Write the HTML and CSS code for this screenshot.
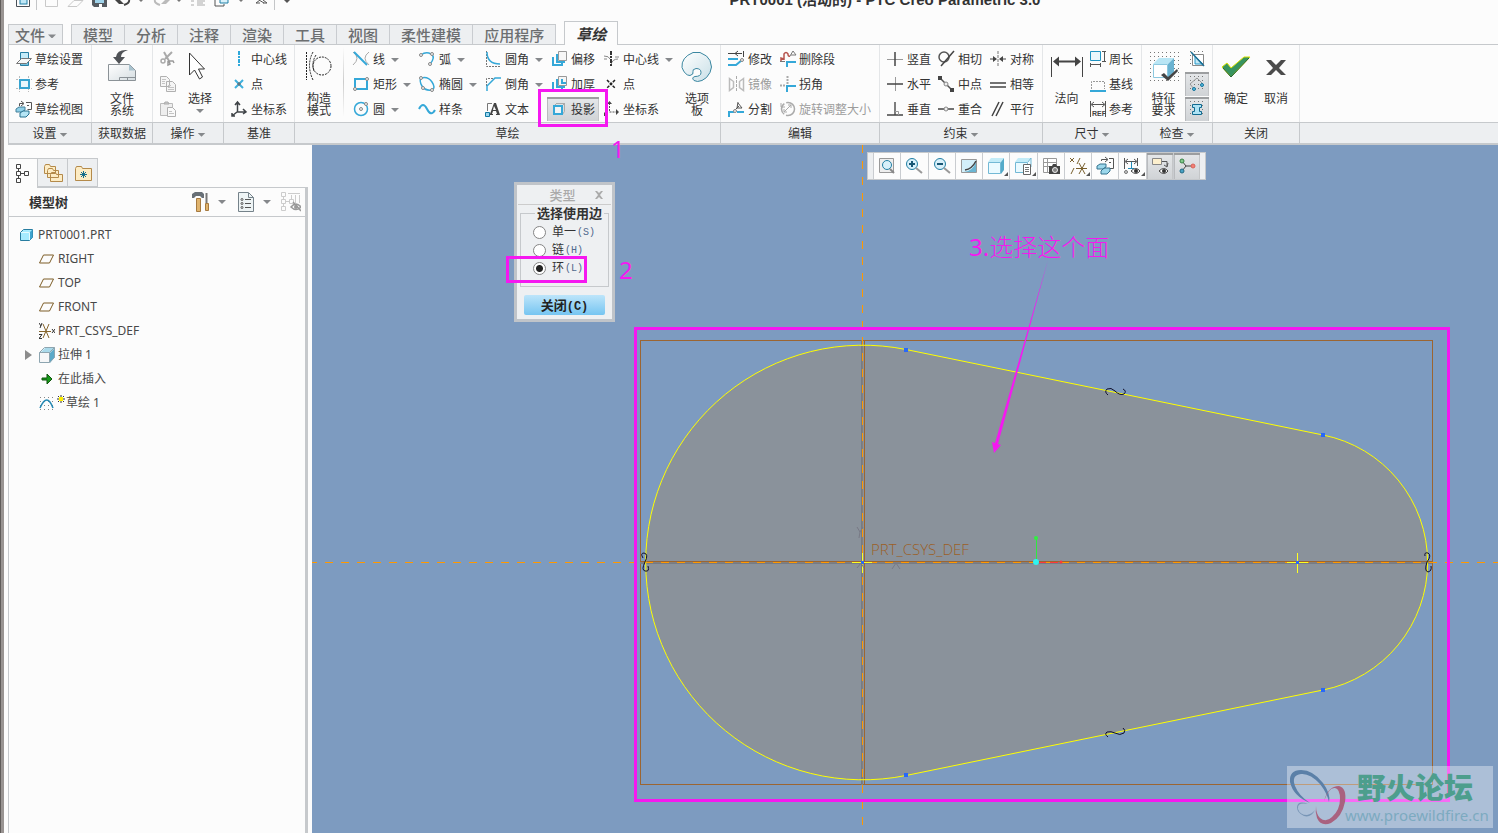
FILE: index.html
```html
<!DOCTYPE html>
<html lang="zh-CN">
<head>
<meta charset="utf-8">
<title>PRT0001 (活动的) - PTC Creo Parametric 3.0</title>
<link rel="stylesheet" href="styles.css">
</head>
<body>
<div class="app">
  <header class="titlebar">
    <svg class="quick" viewBox="0 0 290 12">
      <g fill="none" stroke="#555">
        <path d="M8.500 0v6.500h13V0" stroke="#4a5058"/><rect x="12" y="-3" width="7" height="7" fill="#bfe6f5" stroke="#1f7fa5"/>
        <path d="M28.500 0v10M266.500 0v10" stroke="#c4c6c8"/>
        <path d="M37.500 0v6.500h12V0M60 6.500l6-6h9l-6 6z" stroke="#c9c9c9"/>
      </g>
      <path d="M84 0h15v7H86l-2-2z" fill="#555b61"/><path d="M87 0h9v3h-9z" fill="#9fd3ea"/><path d="M91 4h3v3h-3z" fill="#fff"/>
      <path d="M107 0l4 4h5L112 0z" fill="#444"/><path d="M121 0q1 3-5 5" fill="none" stroke="#444" stroke-width="2"/>
      <path d="M162 0l-4 4h-5l4-4z" fill="#bbb"/><path d="M147 0q-1 3 5 5" fill="none" stroke="#bbb" stroke-width="2"/>
      <path d="M131 0h4l-2 2zM169 0h4l-2 2zM231 0h4l-2 2z" fill="#777"/>
      <path d="M183 1h3M183 5h3M189 1h8M189 5h8M189 3h6" stroke="#aaa" fill="none"/>
      <path d="M207 0v6h9V4" fill="none" stroke="#555"/><path d="M212-4h8v7h-8z" fill="#d9f1fa" stroke="#1f7fa5"/>
      <path d="M248 3l4-3M248 3h4M259 3l-4-3M259 3h-4M251 0l5 3" fill="none" stroke="#555"/>
      <path d="M276 0h6l-3 3z" fill="#555"/>
    </svg>
    <div class="title">PRT0001 (活动的) - PTC Creo Parametric 3.0</div>
  </header>

  <nav class="tabs">
    <button class="tab file">文件<i class="caret"></i></button>
    <div class="tabset">
      <button class="tab">模型</button><button class="tab">分析</button><button class="tab">注释</button><button class="tab">渲染</button><button class="tab">工具</button><button class="tab">视图</button><button class="tab">柔性建模</button><button class="tab">应用程序</button>
    </div>
    <button class="tab active">草绘</button>
  </nav>

  <div class="ribbon">
    <section class="group">
      <div class="body lead7">
        <div class="col w75">
          <button class="cmd tight"><svg viewBox="0 0 16 16"><path d="M4.500 1.500h8v13h-8z" fill="#74bfdd" stroke="#277fa4"/><path d="M5 2h7v5H5z" fill="#c5ecfa"/><path d="M0.500 12.500l5-5h10l-5 5z" fill="#f5f7f8" stroke="#777"/></svg>草绘设置</button>
          <button class="cmd tight"><svg viewBox="0 0 16 16"><path d="M0 3.500h16M0 12.500h16M3.500 0v16M12.500 0v16" stroke="#bbb" stroke-dasharray="2 1"/><rect x="4" y="4" width="9" height="8" fill="#eaf7fc" stroke="#38a4d0" stroke-width="2"/></svg>参考</button>
          <button class="cmd tight"><svg viewBox="0 0 16 16"><path d="M3.500 5V2.500h4M5 0l3 2.500L5 5M10 1.500h5.500v7h-4M11 4.500h2" fill="none" stroke="#555"/><path d="M0 8l3-2h6v3l-3 2H0z" fill="#8fd0e8" stroke="#44809a"/><path d="M4 12l3-2h6v3l-3 3H4z" fill="#b5e5f5" stroke="#26708e"/></svg>草绘视图</button>
        </div>
      </div>
      <footer>设置<i class="caret"></i></footer>
    </section>

    <section class="group">
      <div class="body"><button class="big w60"><svg viewBox="0 0 32 34"><defs><linearGradient id="sheet" x2="1" y2="1"><stop offset="0" stop-color="#fff"/><stop offset="1" stop-color="#d5dde1"/></linearGradient></defs><path d="M2.500 15.500h21l6 6v10h-27z" fill="url(#sheet)" stroke="#8b9297"/><path d="M23 15v6.500h6z" fill="#a9c3cf"/><path d="M13.500 32v-3.500h16M21.500 28v4" fill="none" stroke="#8b9297"/><path d="M22 1q-11-1-12 7H7l6 7 6-7h-4q0-5 7-7z" fill="#505357"/></svg><span>文件<br>系统</span></button></div>
      <footer>获取数据</footer>
    </section>

    <section class="group">
      <div class="body lead7">
        <div class="col w20">
          <button class="cmd" aria-label="剪切"><svg viewBox="0 0 16 16"><path d="M4 1l5 9M12 1L5 8" fill="none" stroke="#aaa" stroke-width="2"/><circle cx="3" cy="10" r="2" fill="none" stroke="#aaa" stroke-width="1.500"/><path d="M8 10v4l2-1-1-3h4l1 2" fill="none" stroke="#999" stroke-width="1.500"/></svg></button>
          <button class="cmd" aria-label="复制"><svg viewBox="0 0 16 16"><path d="M.500.500h6l3 3v7h-9zM6.500 5.500h6l3 3v7h-9z" fill="#f5f5f5" stroke="#b0b0b0"/><path d="M2 3.500h4M2 5.500h3M2 7.500h3M8 9.500h3M8 11.500h6M8 13.500h6" stroke="#c4c4c4"/></svg></button>
          <button class="cmd" aria-label="粘贴"><svg viewBox="0 0 16 16"><path d="M.500 2.500h12v12H.500z" fill="#eee" stroke="#bbb"/><path d="M4 3l1-2h3l1 2z" fill="#ccc" stroke="#aaa"/><path d="M7.500 6.500h5l3 3v6h-8z" fill="#fafafa" stroke="#b0b0b0"/><path d="M9 10.500h3M9 12.500h5" stroke="#c4c4c4"/></svg></button>
        </div>
        <button class="big w43"><svg viewBox="0 0 32 34"><path d="M5.500 4v22l5-5 5 9 3-2-4-8h6z" fill="#fff" stroke="#333"/></svg><span>选择</span><i class="caret"></i></button>
      </div>
      <footer>操作<i class="caret"></i></footer>
    </section>

    <section class="group">
      <div class="body lead7">
        <div class="col w63">
          <button class="cmd"><svg viewBox="0 0 16 16"><path d="M8 0v16" stroke="#2fa8da" stroke-width="2" stroke-dasharray="4 1 2 1"/></svg>中心线</button>
          <button class="cmd"><svg viewBox="0 0 16 16"><path d="M4 4l8 8M12 4l-8 8" stroke="#3eb0de" stroke-width="2"/><path d="M8 6v4M6 8h4" stroke="#666"/></svg>点</button>
          <button class="cmd"><svg viewBox="0 0 16 16"><path d="M6.500 2v9h8M6 11l-5 4M4 4l2.500-3L9 4M12 8l3 3-3 2M1 12v3h3" fill="none" stroke="#3f4347" stroke-width="1.500"/></svg>坐标系</button>
        </div>
      </div>
      <footer>基准</footer>
    </section>

    <section class="group">
      <div class="body">
        <button class="big w48"><svg viewBox="0 0 32 34"><g fill="none" stroke="#222" stroke-dasharray="2 1"><path d="M3.500 3v28M10 3q-7 13 0 28M13 6q-5 8-2 16"/><circle cx="19" cy="17" r="9"/></g></svg><span>构造<br>模式</span></button>
        <hr>
        <div class="col w66">
          <button class="cmd"><svg viewBox="0 0 16 16"><path d="M0 1q8 6 0 13M16 1q-8 6 0 13" fill="none" stroke="#aaa"/><path d="M1 1l13 13" stroke="#35a8d8" stroke-width="2"/></svg>线<i class="caret"></i></button>
          <button class="cmd"><svg viewBox="0 0 16 16"><path d="M2 3h12v10H2z" fill="none" stroke="#35a8d8" stroke-width="2"/><g class="node"><circle cx="14" cy="3" r="1.500"/><circle cx="2" cy="13" r="1.500"/></g></svg>矩形<i class="caret"></i></button>
          <button class="cmd"><svg viewBox="0 0 16 16"><circle cx="8" cy="8" r="6.500" fill="none" stroke="#35a8d8" stroke-width="1.500"/><g class="node"><circle cx="8" cy="8" r="1.500"/><circle cx="13" cy="3" r="1.500"/></g></svg>圆<i class="caret"></i></button>
        </div>
        <div class="col w66">
          <button class="cmd"><svg viewBox="0 0 16 16"><path d="M2 4q5-4 10-1t-1 10" fill="none" stroke="#35a8d8" stroke-width="1.500"/><g class="node"><circle cx="2" cy="4" r="1.500"/><circle cx="13" cy="3" r="1.500"/><circle cx="11" cy="13" r="1.500"/></g></svg>弧<i class="caret"></i></button>
          <button class="cmd"><svg viewBox="0 0 16 16"><path d="M2 2q7-2 11 4t0 8q-7 1-10-4T2 2z" fill="none" stroke="#35a8d8" stroke-width="1.500"/><g class="node"><circle cx="2" cy="2" r="1.500"/><circle cx="4" cy="12" r="1.500"/><circle cx="13" cy="14" r="1.500"/></g></svg>椭圆<i class="caret"></i></button>
          <button class="cmd"><svg viewBox="0 0 16 16"><path d="M0 8q4-8 8 0t8 1" fill="none" stroke="#35a8d8" stroke-width="2"/></svg>样条</button>
        </div>
        <div class="col w62">
          <button class="cmd"><svg viewBox="0 0 16 16"><path d="M1.500 0v15.500H15" fill="none" stroke="#777" stroke-dasharray="2 1"/><path d="M2 1q0 12 13 12" fill="none" stroke="#35a8d8" stroke-width="1.500"/></svg>圆角<i class="caret"></i></button>
          <button class="cmd"><svg viewBox="0 0 16 16"><path d="M1.500 10V2.500H10" fill="none" stroke="#777" stroke-dasharray="2 1"/><path d="M2 15v-5l8-8h6" fill="none" stroke="#35a8d8" stroke-width="1.500"/></svg>倒角<i class="caret"></i></button>
          <button class="cmd"><svg viewBox="0 0 16 16"><path d="M2.500 10V2.500H7" fill="none" stroke="#777"/><path d="M9 2h2l4 12h-4v-1h1l-1-3H8l-1 3h1v1H4v-1h1zM8 9h3L9 5z" fill="#444"/><path d="M.500 11.500h4v4h-4z" fill="#9bd6ef" stroke="#1178a2"/></svg>文本</button>
        </div>
        <div class="col w56 inset">
          <button class="cmd"><svg viewBox="0 0 16 16"><path d="M7.500.500h8v9h-8z" fill="#f6f6f6" stroke="#999"/><path d="M2 6v8h9v-3M6 3v8h8" fill="none" stroke="#35a8d8" stroke-width="2"/></svg>偏移</button>
          <button class="cmd"><svg viewBox="0 0 16 16"><path d="M7.500.500h8v9h-8z" fill="#f6f6f6" stroke="#999"/><path d="M2 6v8h9v-3M6 3v8h8M11 3v4h4" fill="none" stroke="#35a8d8" stroke-width="2"/></svg>加厚</button>
          <button class="cmd pressed"><svg viewBox="0 0 16 16"><path d="M5.500 2.500h8v8L11 14M3 5l3-3M11 5l3-3" fill="none" stroke="#aaa"/><path d="M3 5v8h8V5z" fill="#f2f5f7" stroke="#35a8d8" stroke-width="2"/></svg>投影<span class="mark"></span></button>
        </div>
        <div class="col w75">
          <button class="cmd"><svg viewBox="0 0 16 16"><path d="M1 5q5 0 6 3M15 8q-6 0-7 6M1 8h3M12 6h4" fill="none" stroke="#888"/><path d="M8 0v16" stroke="#333" stroke-width="2" stroke-dasharray="4 1 2 1"/></svg>中心线<i class="caret"></i></button>
          <button class="cmd"><svg viewBox="0 0 16 16"><path d="M4 4l8 8M12 4l-8 8" stroke="#222" stroke-width="1.500" stroke-dasharray="3 1"/></svg>点</button>
          <button class="cmd"><svg viewBox="0 0 16 16"><path d="M6.500 2v9h8" fill="none" stroke="#555" stroke-dasharray="2 1"/><path d="M4 3l2.500-3L9 3zM13 8l3 3-3 3zM1 11v4h4z" fill="#444"/></svg>坐标系</button>
        </div>
        <button class="big w42"><svg viewBox="0 0 32 34"><defs><linearGradient id="palette" x2="1" y2="1"><stop offset="0" stop-color="#fff"/><stop offset="1" stop-color="#c8dfe7"/></linearGradient></defs><path d="M12 3.500h7q8 3 10 8 3 7 0 12-3 6-8 8-5 2-8 0-3-3 1-4 6 0 6-4 0-4-5-4-4 1-3 3 1 3-3 4-5 0-8-8-1-10 11-15z" fill="url(#palette)" stroke="#3b87a1"/></svg><span>选项<br>板</span></button>
      </div>
      <footer>草绘</footer>
    </section>

    <section class="group">
      <div class="body lead7">
        <div class="col w52">
          <button class="cmd"><svg viewBox="0 0 16 16"><path d="M0 2.500h14M10 0l-3 2.500L10 5M15.500 0v6" fill="none" stroke="#444"/><path d="M0 8h10M0 14h8l6-5" fill="none" stroke="#35a8d8" stroke-width="2"/><g class="node"><circle cx="14" cy="9" r="1.500"/></g></svg>修改</button>
          <button class="cmd" disabled><svg viewBox="0 0 16 16"><path d="M1.500 2.500l4 3v6l-4 3zM15.500 2.500l-4 3v6l4 3z" fill="none" stroke="#bbb" stroke-width="1.500"/><path d="M8.500 0v16" stroke="#aaa" stroke-dasharray="3 1"/></svg>镜像</button>
          <button class="cmd"><svg viewBox="0 0 16 16"><path d="M1 16v-5h5M9 11h7" fill="none" stroke="#35a8d8" stroke-width="2"/><path d="M7 9l4-4M10 2l4 5H9l1-6" fill="none" stroke="#555"/><g class="node"><circle cx="7" cy="10" r="1.500"/></g></svg>分割</button>
        </div>
        <div class="col w99">
          <button class="cmd tight"><svg viewBox="0 0 16 16"><path d="M1 11V7l3 1V3q2-3 4 0 0 3 2 2" fill="none" stroke="#b6544e" stroke-width="1.500"/><path d="M7 16v-5h9" fill="none" stroke="#35a8d8" stroke-width="2"/><path d="M10 5l3-5 3 4h-5M0 10.500h5" fill="none" stroke="#777"/></svg>删除段</button>
          <button class="cmd tight"><svg viewBox="0 0 16 16"><path d="M7.500 0v9M0 9.500h6" stroke="#aaa" stroke-width="2" stroke-dasharray="2 1"/><path d="M7 16v-6h9" fill="none" stroke="#35a8d8" stroke-width="2"/></svg>拐角</button>
          <button class="cmd tight" disabled><svg viewBox="0 0 16 16"><circle cx="8" cy="8" r="6.500" fill="none" stroke="#aaa" stroke-width="1.500" stroke-dasharray="12 2"/><path d="M4 11l7-7M8 4h3v3M4 8v3h3M1 2v4h4" fill="none" stroke="#aaa"/></svg>旋转调整大小</button>
        </div>
      </div>
      <footer>编辑</footer>
    </section>

    <section class="group">
      <div class="body lead7">
        <div class="col w51">
          <button class="cmd"><svg viewBox="0 0 16 16"><path d="M0 8.500h16" stroke="#999"/><path d="M8 1v14" stroke="#444" stroke-width="1.500"/></svg>竖直</button>
          <button class="cmd"><svg viewBox="0 0 16 16"><path d="M8.500 1v14" stroke="#999"/><path d="M0 8h16" stroke="#444" stroke-width="1.500"/></svg>水平</button>
          <button class="cmd"><svg viewBox="0 0 16 16"><path d="M8 1v13" stroke="#555" stroke-width="1.500"/><path d="M0 14h16" stroke="#444" stroke-width="1.500"/><path d="M8 10.500h3.500V14" fill="none" stroke="#999"/></svg>垂直</button>
        </div>
        <div class="col w52">
          <button class="cmd"><svg viewBox="0 0 16 16"><circle cx="6" cy="6" r="5" fill="none" stroke="#555" stroke-width="1.500"/><path d="M3 15L16 0" stroke="#444" stroke-width="1.500"/></svg>相切</button>
          <button class="cmd"><svg viewBox="0 0 16 16"><path d="M2 2l12 12" stroke="#555" stroke-width="1.500"/><path d="M0 0h4v4H0zM12 12h4v4h-4z" fill="#444"/><g class="node"><circle cx="8" cy="8" r="2"/></g></svg>中点</button>
          <button class="cmd"><svg viewBox="0 0 16 16"><path d="M0 8h16" stroke="#444" stroke-width="1.500"/><g class="node"><circle cx="8" cy="8" r="2"/></g></svg>重合</button>
        </div>
        <div class="col w52">
          <button class="cmd"><svg viewBox="0 0 16 16"><path d="M8 0v16" stroke="#777" stroke-dasharray="3 1"/><path d="M0 8h5M11 8h5" stroke="#444"/><path d="M3 5l4 3-4 3zM13 5L9 8l4 3z" fill="#444"/></svg>对称</button>
          <button class="cmd"><svg viewBox="0 0 16 16"><path d="M0 7h16M0 11h16" stroke="#444" stroke-width="1.500"/></svg>相等</button>
          <button class="cmd"><svg viewBox="0 0 16 16"><path d="M2 15L9 1M6 15l7-14" stroke="#444" stroke-width="1.500"/></svg>平行</button>
        </div>
      </div>
      <footer>约束<i class="caret"></i></footer>
    </section>

    <section class="group">
      <div class="body">
        <button class="big w47"><svg viewBox="0 0 32 34"><path d="M.500 8v20M31.500 8v20" stroke="#444"/><path d="M5 12.500h22" stroke="#444" stroke-width="2"/><path d="M2 12.500l6-5v10zM30 12.500l-6-5v10z" fill="#444"/></svg><span>法向</span></button>
        <div class="col w51">
          <button class="cmd tight"><svg viewBox="0 0 16 16"><path d="M.500.500h10v9H.500z" fill="#eaf7fc" stroke="#1f93c2"/><path d="M14.500 1v9M12 .500h4M12 10.500h4M1 13.500h9M.500 12v4M10.500 12v4" stroke="#555"/></svg>周长</button>
          <button class="cmd tight"><svg viewBox="0 0 16 16"><path d="M1.500 13V5.500h13V13" fill="none" stroke="#999" stroke-dasharray="2 1"/><path d="M0 15h16" stroke="#35a8d8" stroke-width="2"/></svg>基线</button>
          <button class="cmd tight"><svg viewBox="0 0 16 16"><path d="M.500 0v16M15.500 0v16M2 3.500h12M4 1L1 3.500 4 6M12 1l3 2.500L12 6" fill="none" stroke="#555"/><text x="2" y="15" class="ref">REF</text></svg>参考</button>
        </div>
      </div>
      <footer>尺寸<i class="caret"></i></footer>
    </section>

    <section class="group">
      <div class="body">
        <button class="big w43"><svg viewBox="0 0 32 34"><g stroke="#777" stroke-dasharray="1 3"><path d="M2 3.500h29M2 7.500h29M2 11.500h29M2 15.500h29M2 19.500h29M2 23.500h29M2 27.500h29M2 31.500h29"/></g><path d="M5 15l6-6h15l-6 6z" fill="#b9e6f5"/><path d="M20 15l6-6v14l-6 6z" fill="#6bb3d1"/><path d="M5.500 15.500h14v13h-14z" fill="#fff" stroke="#8cc8df"/><path d="M13 26l3-2 4 4 9-8 1 2-10 10z" fill="#444"/></svg><span>特征<br>要求</span></button>
        <div class="col w27 checks">
          <button class="cmd icon" aria-label="着色封闭环"><svg viewBox="0 0 16 16"><path d="M1 .500h15M1 4.500h15M1 8.500h15M1 12.500h15" stroke="#777" stroke-dasharray="1 3"/><path d="M3.500 3.500h11v11h-11z" fill="#fff" stroke="#888"/><path d="M6 5v8h8z" fill="#c3e8f5" stroke="#2598c8"/><path d="M2 1l13 14" stroke="#1d6f95" stroke-width="1.500"/></svg></button>
          <button class="cmd icon pressed" aria-label="突出显示开放端"><svg viewBox="0 0 16 16"><path d="M1 .500h15M1 4.500h15M1 8.500h15M1 12.500h15" stroke="#777" stroke-dasharray="1 3"/><path d="M5 13L1 8l7-6 6 6" fill="none" stroke="#999"/><circle cx="5" cy="13" r="1.500" fill="#5ac0e6" stroke="#16749b"/><circle cx="13" cy="9" r="1.500" fill="#5ac0e6" stroke="#16749b"/></svg></button>
          <button class="cmd icon pressed" aria-label="重叠几何"><svg viewBox="0 0 16 16"><path d="M1 .500h15M1 4.500h15M1 8.500h15M1 12.500h15" stroke="#777" stroke-dasharray="1 3"/><path d="M3.500 3.500h9v3h-2v4h2v3h-9v-3h2v-4h-2z" fill="#aee3f5" stroke="#126b91"/></svg></button>
        </div>
      </div>
      <footer>检查<i class="caret"></i></footer>
    </section>

    <section class="group">
      <div class="body lead3">
        <button class="big w40"><svg viewBox="0 0 32 34"><path d="M2 18l5-4 4 5L24 8h6L11 28z" fill="#379460" stroke="#d8e000"/><path d="M3 19l8 9L29 9" fill="none" stroke="#246338"/></svg><span>确定</span></button>
        <button class="big w40"><svg viewBox="0 0 32 34"><path d="M6 11h5l5 5 5-5h5l-7 8 7 7h-5l-5-5-5 5H6l7-7z" fill="#4b4b4b"/></svg><span>取消</span></button>
      </div>
      <footer>关闭</footer>
    </section>
    <section class="group rest"><div class="body"></div><footer></footer></section>
  </div>

  <div class="work">
    <aside class="side">
      <div class="sidetabs">
        <button class="on" aria-label="模型树"><svg viewBox="0 0 20 20"><path d="M3.500.500h4v4h-4zM3.500 7.500h4v4h-4zM3.500 14.500h4v4h-4zM11.500 7.500h4v4h-4zM5.500 5v2M5.500 12v2M8 9.500h3" fill="none" stroke="#444"/></svg></button>
        <button aria-label="文件夹浏览器"><svg viewBox="0 0 20 20"><g fill="#fdecc4" stroke="#b48a4a"><path d="M1.500 3.500l1-2h4l1 2h5v7h-11zM4.500 7.500l1-2h4l1 2h5v7h-11zM7.500 11.500l1-2h4l1 2h6v7h-12z"/></g></svg></button>
        <button aria-label="收藏夹"><svg viewBox="0 0 20 20"><path d="M2.500 5.500l1-2h5l1 2h9v12h-16z" fill="#fdecc4" stroke="#b48a4a"/><path d="M10.500 8v7M7 11.500h7M8 9l5 5M13 9l-5 5" stroke="#176e8b"/></svg></button>
      </div>
      <div class="panel">
        <div class="panelhead">
          <h2>模型树</h2>
          <button aria-label="设置"><svg viewBox="0 0 20 20"><path d="M5.500 6.500h4v13h-4z" fill="#e0b46e" stroke="#a67a40"/><path d="M1 2l3-2h7l2 2v4h-2L9 4H5L3 6H1z" fill="#687077"/><path d="M15.500 1v10" stroke="#777" stroke-width="2"/><path d="M14.500 11.500h3v7h-3z" fill="#e0b46e" stroke="#a67a40"/></svg></button><i class="caret"></i>
          <button aria-label="显示"><svg viewBox="0 0 20 20"><path d="M2.500.500h10l5 5v14h-15z" fill="#eef4f5" stroke="#75828a"/><path d="M12.500 1v4.500h5" fill="none" stroke="#75828a"/><g fill="none" stroke="#555"><circle cx="6" cy="7.500" r="1"/><circle cx="6" cy="11.500" r="1"/><circle cx="6" cy="15.500" r="1"/><path d="M9 7.500h6M9 11.500h6M9 15.500h6"/></g></svg></button><i class="caret"></i>
          <button aria-label="隐藏树列"><svg viewBox="0 0 20 20"><path d="M.500.500h4v4h-4zM.500 7.500h4v4h-4zM.500 14.500h4v4h-4zM8.500 7.500h4v4h-4zM2.500 5v2M2.500 12v2M5 9.500h3M7 1.500h12M10.500 3v4M14.500 3v8M18.500 3v8" fill="none" stroke="#ccc"/><path d="M10 15q5-6 10 0-5 5-10 0zM12 10l8 9" fill="none" stroke="#999" stroke-width="1.500"/><circle cx="15" cy="15" r="2" fill="#999"/></svg></button>
        </div>
        <ul class="tree">
          <li class="root"><svg viewBox="0 0 16 16"><path d="M1.500 5.500l3-3h9v8l-3 3h-9z" fill="#a5ebff" stroke="#287da0"/><path d="M10.500 5.500l3-3v8l-3 3z" fill="#3fa4cf"/><path d="M2 5.500h8.500v7.500" fill="none" stroke="#e3fbff"/></svg>PRT0001.PRT</li>
          <li><svg viewBox="0 0 16 16"><path d="M4.500 4h10l-4 8H.500z" fill="none" stroke="#7c5c26"/></svg>RIGHT</li>
          <li><svg viewBox="0 0 16 16"><path d="M4.500 4h10l-4 8H.500z" fill="none" stroke="#7c5c26"/></svg>TOP</li>
          <li><svg viewBox="0 0 16 16"><path d="M4.500 4h10l-4 8H.500z" fill="none" stroke="#7c5c26"/></svg>FRONT</li>
          <li><svg viewBox="0 0 16 16"><path d="M0 8.500h12M4 1l6 14M10 1L4 15" stroke="#86652c"/><path d="M0 0l2 3M3 0L1 5M13 6l3 4M16 6l-3 4M0 11.500h3l-3 4h3" fill="none" stroke="#333"/></svg>PRT_CSYS_DEF</li>
          <li class="parent"><svg viewBox="0 0 16 16"><path d="M1 6l5-5h10l-5 5z" fill="#a9d9ea"/><path d="M11 6l5-5v9l-5 6z" fill="#5ba9c8"/><path d="M.500 5.500h10v10H.500zM.500 5.500l5-5h10v10l-5 5M10.500 5.500l5-5" fill="none" stroke="#8da5b0"/><path d="M1 6h9v9H1z" fill="#f6f7f8"/></svg>拉伸 1</li>
          <li><svg viewBox="0 0 16 16"><path d="M3 7h5V3l5 5-5 5v-4H3z" fill="#159a18" stroke="#11550f"/></svg>在此插入</li>
          <li><svg class="wide" viewBox="0 0 26 16"><path d="M1 2.500h14M1 6.500h14M1 10.500h14M1 14.500h14" stroke="#888" stroke-dasharray="1 3"/><path d="M1 13q7-16 13 0" fill="none" stroke="#2589b4" stroke-width="1.500"/><path d="M22 0v8M18 4h8M19 1l6 6M25 1l-6 6" stroke="#333"/><path d="M20 2h4v4h-4z" fill="#fff000"/></svg>草绘 1</li>
        </ul>
      </div>
    </aside>

    <main class="canvas">
      <svg class="scene">
        <g transform="translate(-312 -145)" fill="none">
          <path d="M906 349.500L1323 435A130 130 0 0 1 1323 690L906 775.500A217.300 217.300 0 1 1 906 349.500z" fill="#8a929b"/>
          <g shape-rendering="crispEdges">
            <path d="M640.500 340.500h792v444h-792z" stroke="#9c6531"/>
            <path d="M861.500 340v445M640 563.500h792" stroke="#767b84"/>
            <path d="M864.500 340v445M640 561.500h792" stroke="#9c6531"/>
            <path d="M862.500 340v445M640 562.500h792" stroke="#84807c"/>
            <path d="M309 562.500h2400M862.500 145v1800" stroke="#ff9900" stroke-dasharray="8 8"/>
          </g>
          <path d="M906 349.500L1323 435A130 130 0 0 1 1323 690L906 775.500A217.300 217.300 0 1 1 906 349.500z" stroke="#ffff00"/>
          <g stroke="#10102c">
            <path d="M1108 395q-4-3-1-6 4-2 8 2 5 5 9 3 3-3-1-5"/>
            <path d="M1108 737q-4-3-1-5 4-1 8 1 5 3 9 0 2-3-1-5"/>
            <path d="M643 558q-3-5 1-5 5 1 1 9-4 8 0 9 5 1 3-5"/>
            <path d="M1425 556q-1-4 3-3 4 2-1 9-3 9 1 10 4-1 3-6"/>
          </g>
          <path d="M904 348h4v4h-4zM1321 433h4v4h-4zM1321 688h4v4h-4zM904 773h4v4h-4z" fill="#2868f8"/>
          <path d="M1297.500 553v20M1287 562.500h21M862.500 553v20M852 562.500h20" stroke="#ffff20" shape-rendering="crispEdges"/>
          <path d="M1296 561h3v3h-3zM861 561h3v3h-3z" fill="#2868f8"/>
          <g stroke="#787985"><path d="M857 527l3 5 3-5M860 532l-1 6M892 569l4-6 4 6M857 568l4-5 3 5"/></g>
          <text x="871" y="555" class="csys">PRT_CSYS_DEF</text>
          <path d="M1036.500 562v-24" stroke="#30e840"/><circle cx="1036" cy="538" r="2" fill="#30f040"/>
          <path d="M1038 562.500h23" stroke="#ff3838" stroke-dasharray="8 4"/><circle cx="1061" cy="562" r="1.500" fill="#ff3838"/><circle cx="1036" cy="562" r="3" fill="#30f4ef"/>
          <path d="M635.500 328.500h813v472h-813z" stroke="#f518f0" stroke-width="3"/>
          <path d="M1048 260L998 444l3 1-7 8-2-11 3 1z" fill="#f518f0"/>
        </g>
      </svg>

      <div class="note one">1</div>
      <div class="note two">2</div>
      <div class="note three"><b>3.</b>选择这个面</div>

      <div class="viewbar">
        <button aria-label="重新调整"><svg viewBox="0 0 20 20"><path d="M2.500 2.500h14v14h-14z" fill="#eee" stroke="#999"/><circle cx="10" cy="9" r="4.500" fill="#d8f0fa" stroke="#217fa4"/><path d="M13 13l4 4" stroke="#888" stroke-width="2"/></svg></button>
        <button aria-label="放大"><svg viewBox="0 0 20 20"><circle cx="8" cy="8" r="5.500" fill="#d8f0fa" stroke="#217fa4"/><path d="M5 8h6M8 5v6" stroke="#195775" stroke-width="2"/><path d="M12 12l6 5" stroke="#999" stroke-width="2"/></svg></button>
        <button aria-label="缩小"><svg viewBox="0 0 20 20"><circle cx="8" cy="8" r="5.500" fill="#d8f0fa" stroke="#217fa4"/><path d="M5 8h6" stroke="#195775" stroke-width="2"/><path d="M12 12l6 5" stroke="#999" stroke-width="2"/></svg></button>
        <button aria-label="重画"><svg viewBox="0 0 20 20"><path d="M2.500 3.500h15v13h-15z" fill="#d3effa" stroke="#999"/><path d="M17 6v10H5q9-1 12-10z" fill="#6bb5d2"/><path d="M6 14q7-1 11-9" fill="none" stroke="#444" stroke-width="1.500"/></svg></button>
        <button class="menu" aria-label="显示样式"><svg viewBox="0 0 20 20"><path d="M2 6l3-4h13l-3 4z" fill="#c3ecf8"/><path d="M15 6l3-4v12l-3 4z" fill="#55abc9"/><path d="M2.500 6.500h12v11h-12z" fill="#eafaff" stroke="#73b9d5"/></svg></button>
        <button class="menu" aria-label="已保存方向"><svg viewBox="0 0 20 20"><path d="M2 6l3-4h13l-3 4z" fill="#c3ecf8"/><path d="M2.500 6.500h12v10h-12zM15 6l3-4v9" fill="#eafaff" stroke="#73b9d5"/><path d="M10.500 8.500h7v10h-7z" fill="#fff" stroke="#666"/><path d="M12 11.500h4M12 13.500h4M12 15.500h4" stroke="#777"/></svg></button>
        <button aria-label="视图管理器"><svg viewBox="0 0 20 20"><path d="M2.500 2.500h13v14h-13zM2 6.500h13M2 10.500h13M6.500 3v13" fill="#fff" stroke="#999"/><path d="M8 10h3l1-2h3l1 2h3v8H8z" fill="#444"/><circle cx="14" cy="14" r="2.500" fill="#888" stroke="#eee"/></svg></button>
        <button class="menu" aria-label="基准显示过滤器"><svg viewBox="0 0 20 20"><g stroke="#79602e"><path d="M2 2l4 4M6 2L2 6M12 2l-3 6M6 12l-3 6M8 12.500h11M11 7l6 11M17 7l-6 11"/></g></svg></button>
        <button aria-label="草绘视图"><svg viewBox="0 0 20 20"><path d="M6.500 5V3.500h6M10 1l3 2.500L10 6M14 2.500h4.500v10h-4M14 6.500h2" fill="none" stroke="#555"/><path d="M2 10l3-2h6v3l-3 2H2zM6 15l3-3h6v3l-3 3H6z" fill="#9bd7eb" stroke="#35738e"/></svg></button>
        <button class="menu" aria-label="草绘器显示过滤器"><svg viewBox="0 0 20 20"><path d="M2.500 2v11M15.500 2v8M4 5.500h10M6 3L3 5.500 6 8M12 3l3 2.500L12 8" fill="none" stroke="#555"/><path d="M9.500 6v6M6 12.500h6" stroke="#248dba"/><circle cx="4" cy="16" r="1.500" fill="#ccc" stroke="#777"/><path d="M9 15q5-5 9 0-4 5-9 0z" fill="#fff" stroke="#444"/><circle cx="14" cy="15" r="2" fill="#333"/></svg></button>
        <button class="pressed" aria-label="注释显示"><svg viewBox="0 0 20 20"><path d="M2.500 2.500h9v6h-9z" fill="#fdf0ce" stroke="#888"/><path d="M12 5.500h5v5M14 9l3 2 1-4" fill="none" stroke="#555"/><path d="M9 15q5-5 9 0-4 5-9 0z" fill="#fff" stroke="#444"/><circle cx="14" cy="15" r="2" fill="#333"/></svg></button>
        <button class="pressed" aria-label="旋转中心"><svg viewBox="0 0 20 20"><path d="M5 5l4 5h6M9 10l-4 5" fill="none" stroke="#444"/><circle cx="5" cy="5" r="2" fill="#82c88b" stroke="#388346"/><circle cx="16" cy="10" r="2" fill="#f47e73" stroke="#d8665c"/><circle cx="5" cy="15" r="2" fill="#48a1c4" stroke="#236984"/></svg></button>
      </div>

      <form class="dialog">
        <header>类型<button type="button" aria-label="关闭对话框"><svg viewBox="0 0 8 8"><path d="M0 0h2l2 2 2-2h2L5 4l3 4H6L4 6 2 8H0l3-4z" fill="#aaa"/></svg></button></header>
        <fieldset>
          <legend>选择使用边</legend>
          <label><input type="radio" name="edge"> 单一<kbd>(S)</kbd></label>
          <label><input type="radio" name="edge"> 链<kbd>(H)</kbd></label>
          <label><input type="radio" name="edge" checked> 环<kbd>(L)</kbd><span class="mark"></span></label>
        </fieldset>
        <button type="button" class="close">关闭<kbd>(C)</kbd></button>
      </form>

      <div class="watermark">
        <svg viewBox="0 0 60 62"><g><path fill-rule="evenodd" d="M3 16Q2 4 14 4q12 0 22 13 8 11 6 19-2-9-9-18Q23 7 14 8 4 9 8 20q4 10 15 17Q6 30 3 16z" fill="#5b80a8"/><path d="M21 38q-11-2-10 5 2 6 9 6 5-1 8-5-4 8-11 6-7-3-7-9 1-7 11-3z" fill="#7895b6"/><path d="M37 35q4-15 15-15 8 2 6 16-3 15-14 21-10 4-14-5-2-6-1-12 0 8 4 12 6 5 12-1 8-7 8-18 0-10-5-11-6-1-11 13z" fill="#a9627f"/></g></svg>
        <div><strong>野火论坛</strong><span>www.proewildfire.cn</span></div>
      </div>
    </main>
  </div>
</div>
</body>
</html>
```

FILE: styles.css
```css
* { box-sizing: border-box; }
body {
  margin: 0;
  background: #fcfcfc;
  color: #333;
  font: 12px/16px "Noto Sans", "Noto Sans CJK SC", sans-serif;
}
button {
  margin: 0;
  padding: 0;
  border: 0;
  background: none;
  color: inherit;
  font: inherit;
}
svg { display: block; flex: none; }
.app {
  display: flex;
  flex-direction: column;
  min-height: 100vh;
  padding-left: 8px;
  background: linear-gradient(90deg, #605c5a 0 1px, #999492 1px 4px, #fcfcfc 4px);
}

.titlebar { display: flex; height: 21px; overflow: hidden; }
.quick { width: 290px; height: 12px; }
.title {
  flex: 1;
  padding-right: 26px;
  text-align: center;
  font: bold 15px/0 "Liberation Sans", "Noto Sans CJK SC", sans-serif;
  white-space: nowrap;
}

.tabs { display: flex; align-items: flex-end; height: 24px; border-bottom: 1px solid #c6c9cc; }
.tab {
  height: 19px;
  padding: 0 11px;
  border-right: 1px solid #c9ccd0;
  background: #edeff1;
  color: #6c6e70;
  font-size: 15px;
  line-height: 18px;
  font-weight: 500;
  white-space: nowrap;
}
.tabset { display: flex; margin: 0 8px; border: 1px solid #c6c9cc; border-width: 1px 0 0 1px; }
.tab.file { height: 20px; padding: 0 6px; border: 1px solid #c6c9cc; border-bottom: 0; }
.tab.active {
  height: 24px;
  margin-bottom: -1px;
  border: 1px solid #c6c9cc;
  border-bottom: 0;
  background: #fcfcfc;
  color: #333;
  font-weight: bold;
  font-style: italic;
  line-height: 24px;
}
.caret {
  display: inline-block;
  width: 8px;
  height: 4px;
  margin-left: 3px;
  background: #85888b;
  clip-path: polygon(0 0, 100% 0, 50% 100%);
  vertical-align: middle;
}

.ribbon { display: flex; border-left: 1px solid #c6c9cc; }
.group { display: flex; flex-direction: column; flex: none; }
.body { display: flex; height: 77px; padding: 2px 0 1px; border-right: 1px solid #e4e6e8; }
.group footer {
  height: 23px;
  border: 1px solid #c6c9cc;
  border-width: 1px 1px 2px 0;
  background: #edeff1;
  line-height: 22px;
  text-align: center;
}
.rest { flex: 1; }
.rest .body, .rest footer { border-right: 0; }
.lead7 { padding-left: 7px; }
.lead3 { padding-left: 3px; padding-right: 3px; }
.col { display: grid; grid-template-rows: 24px 24px 24px; row-gap: 1px; justify-items: start; align-content: start; }
.cmd { display: flex; align-items: center; gap: 4px; height: 24px; padding-top: 2px; white-space: nowrap; }
.cmd svg { width: 16px; height: 16px; margin-bottom: 2px; overflow: visible; }
.cmd.tight { gap: 3px; }
.cmd:disabled { color: #9c9c9c; }
.cmd .caret { margin-left: 2px; }
.inset .cmd { padding: 2px 4px 0; }
.icon { width: 24px; justify-content: center; }
.pressed { background: linear-gradient(#e6e8ea, #d0d3d6); box-shadow: inset 0 2px #9c9ea0, inset 1px 0 #b9bbbe, inset -1px 0 #c4c6c8; }
.cmd.pressed { position: relative; }
.node { fill: #eee; stroke: #888; }
.ref { font: bold 7px "Liberation Sans", sans-serif; fill: #444; }
.mark { position: absolute; z-index: 3; border: 3px solid #f518f0; pointer-events: none; }
.cmd .mark { inset: -8px -9px -6px; }
.big { display: flex; flex-direction: column; align-items: center; height: 74px; line-height: 12px; }
.big svg { width: 32px; height: 34px; margin: 2px 0 10px; }
.big .caret { margin: 4px 0 0; }
.body hr { width: 1px; height: 70px; margin: 0 9px 0 0; border: 0; background: linear-gradient(#fcfcfc, #ccc, #fcfcfc); }
.w20 { width: 20px; }
.w27 { width: 27px; }
.w40 { width: 40px; }
.w42 { width: 42px; padding-right: 4px; }
.w43 { width: 43px; }
.w47 { width: 47px; }
.w48 { width: 48px; }
.w51 { width: 51px; }
.w52 { width: 52px; }
.w56 { width: 56px; }
.w60 { width: 60px; }
.w62 { width: 62px; }
.w63 { width: 63px; }
.w66 { width: 66px; }
.w75 { width: 75px; }
.w99 { width: 99px; }
.lead7 .w43 { padding-right: 3px; }

.work { display: flex; flex: 1; }
.side { display: flex; flex-direction: column; flex: none; width: 304px; padding: 13px 4px 0 0; }
.sidetabs { display: flex; z-index: 1; }
.sidetabs button {
  display: grid;
  place-items: center;
  width: 30px;
  height: 29px;
  border: 1px solid #c6c9cc;
  border-left: 0;
  background: #edeff1;
}
.sidetabs .on { height: 30px; margin-bottom: -1px; border-left: 1px solid #c6c9cc; border-bottom: 0; background: #fcfcfc; }
.sidetabs svg, .panelhead svg { width: 20px; height: 20px; }
.panel { flex: 1; border: 1px solid #c6c9cc; border-width: 1px 3px 0 1px; }
.panelhead { display: flex; align-items: center; height: 29px; padding-right: 4px; border-bottom: 1px solid #c6c9cc; }
.panelhead h2 { flex: 1; margin: 0 0 0 20px; font-size: 13px; line-height: 16px; }
.panelhead .caret { margin: 0 10px 0 7px; }
.tree { margin: 0; padding: 6px 0 0; list-style: none; color: #484848; }
.tree li { display: flex; align-items: center; gap: 3px; height: 24px; padding-left: 30px; }
.tree .root { padding-left: 10px; }
.tree svg { width: 16px; height: 16px; }
.tree .wide { width: 26px; margin-right: -2px; }
.tree .parent { padding-left: 16px; }
.tree .parent::before { content: ""; width: 7px; height: 10px; margin-right: 4px; background: #8c8c8c; clip-path: polygon(0 0, 100% 50%, 0 100%); }

.canvas { position: relative; flex: 1; background: #7d9bc0; }
.scene { position: absolute; inset: 0; width: 100%; height: 100%; overflow: hidden; }
.csys { font: 300 15px "Open Sans", sans-serif; fill: #9c5f26; }
.note { position: absolute; color: #f518f0; font: 24px/24px "Noto Sans", "Noto Sans CJK SC", sans-serif; white-space: nowrap; }
.note b { font-weight: 400; }
.one { left: 299px; top: -8px; }
.two { left: 307px; top: 113px; }
.three { left: 657px; top: 90px; font-weight: 300; }

.viewbar {
  position: absolute;
  left: 555px;
  top: 7px;
  display: flex;
  width: 339px;
  height: 28px;
  padding: 0 5px;
  border: 1px solid #c6c9cc;
  background: #edeff1;
}
.viewbar button { position: relative; display: grid; flex: 1; place-items: center; border-left: 1px solid #c9ccd0; background: #fcfcfc; }
.viewbar .pressed { background: linear-gradient(#e6e8ea, #d0d3d6); }
.viewbar svg { width: 20px; height: 20px; }
.menu::after { content: ""; position: absolute; right: 1px; bottom: 3px; border: 2px solid #555; border-top-color: transparent; border-left-color: transparent; }

.dialog {
  position: absolute;
  left: 202px;
  top: 37px;
  width: 101px;
  padding: 0 3px 4px;
  border: 3px solid #c0c4c9;
  background: #eef0f2;
}
.dialog header {
  position: relative;
  height: 20px;
  margin: 0 -2px;
  padding-right: 4px;
  border-bottom: 1px solid #ccc;
  color: #aaa;
  font-size: 13px;
  line-height: 20px;
  font-weight: 500;
  text-align: center;
}
.dialog header button { position: absolute; right: 8px; top: 6px; }
.dialog header svg { width: 8px; height: 8px; }
.dialog fieldset { margin: 0 0 8px; padding: 2px 0 9px 12px; border: 1px solid #c6c9cc; }
.dialog legend { margin-left: 2px; padding: 0 2px; font-size: 13px; line-height: 16px; font-weight: bold; white-space: nowrap; }
.dialog fieldset label { position: relative; display: flex; align-items: center; height: 18px; white-space: nowrap; }
.dialog input {
  appearance: none;
  width: 13px;
  height: 13px;
  margin: 0 6px 0 0;
  border: 1px solid #858585;
  border-radius: 50%;
  background: #fff;
}
.dialog input:checked { background: radial-gradient(circle, #222 0 3px, #fff 4px); }
.dialog kbd { padding-left: 1px; color: #50688c; font: 10px "Liberation Mono", monospace; }
.dialog .mark { left: -27px; top: -3px; width: 81px; height: 27px; }
.dialog .close { display: block; width: 81px; height: 20px; margin: 0 auto; border-radius: 2px; background: linear-gradient(#bde5fa, #76c5f1); color: #222; font-size: 13px; font-weight: bold; line-height: 18px; }
.dialog .close kbd { padding: 0; color: #222; font-size: 12px; font-weight: bold; }

.watermark { position: absolute; right: 5px; bottom: 5px; display: flex; width: 206px; height: 62px; background: rgba(255, 255, 255, .36); }
.watermark svg { width: 60px; height: 62px; }
.watermark div { display: flex; flex-direction: column; }
.watermark strong { padding-left: 10px; color: #4d9e8d; font: 900 29px/40px "Noto Sans CJK SC", sans-serif; }
.watermark span { margin-left: -2px; color: #7caac0; font: 15px/18px "Noto Sans", sans-serif; }
```
